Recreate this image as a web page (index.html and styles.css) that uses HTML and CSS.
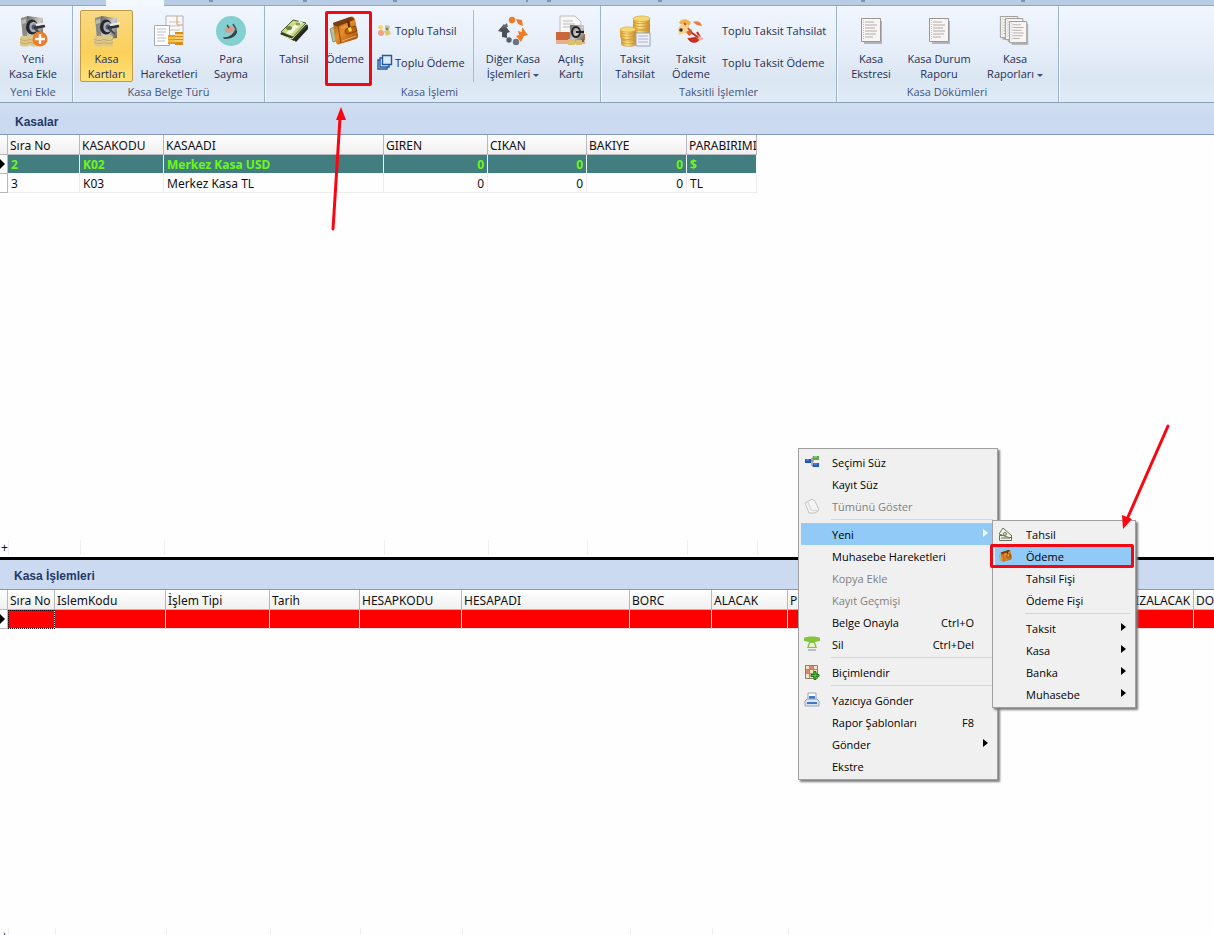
FILE: index.html
```
<!DOCTYPE html>
<html lang="tr">
<head>
<meta charset="utf-8">
<title>Kasa Kartları</title>
<link rel="stylesheet" href="styles.css">
</head>
<body>
<svg class="defs" aria-hidden="true">
  <defs>
    <linearGradient id="steel" x1="0" y1="0" x2="1" y2="1"><stop offset="0" stop-color="#66635e"/><stop offset=".5" stop-color="#cfcdc9"/><stop offset="1" stop-color="#55534f"/></linearGradient>
    <linearGradient id="gold" x1="0" y1="0" x2="1" y2="0"><stop offset="0" stop-color="#d99a2b"/><stop offset=".4" stop-color="#ffe58a"/><stop offset="1" stop-color="#c58a1f"/></linearGradient>
    <linearGradient id="leather" x1="0" y1="0" x2="1" y2="1"><stop offset="0" stop-color="#9c5010"/><stop offset=".45" stop-color="#e88f2c"/><stop offset="1" stop-color="#93440a"/></linearGradient>
    <symbol id="safe" viewBox="0 0 32 32">
      <path d="M4 3l7-2v21l-5 3z" fill="#8d8b87"/><path d="M10 1l16 2v20l-16 2z" fill="url(#steel)"/>
      <path d="M5 5l4-1v4l-4 1z" fill="#bdbab4"/>
      <ellipse cx="15" cy="12" rx="6" ry="7.500" fill="#24262b"/><ellipse cx="16.500" cy="12" rx="4.200" ry="5.200" fill="#a9adb6"/><circle cx="17" cy="12" r="2.500" fill="#4e5663"/>
      <path d="M17 13l11-2" stroke="#2d3036" stroke-width="2.500"/><path d="M18 14l6 5" stroke="#45484e" stroke-width="2"/><path d="M19 10l10-2" stroke="#eee" stroke-width="2.200"/>
      <path d="M3 23c0-3 10-3 10 0v7c0 2-10 2-10 0zM13 22c0-3 9-3 9 0v8c0 2-9 2-9 0z" fill="#dcc888"/>
      <path d="M3 24c2 2 8 2 10 0M13 24c2 2 7 2 9 0M3 27c2 2 8 2 10 0M13 27c2 2 7 2 9 0" stroke="#b89e60" fill="none" stroke-width=".7"/>
    </symbol>
    <symbol id="coins" viewBox="0 0 20 16">
      <path d="M1 4v8c0 4 18 4 18 0V4z" fill="url(#gold)"/><path d="M1 7c2 3 16 3 18 0M1 10c2 3 16 3 18 0M1 13c2 3 16 3 18 0" fill="none" stroke="#c08a2c" stroke-width=".7"/><ellipse cx="10" cy="4" rx="9" ry="3" fill="#f8d76c" stroke="#c99438" stroke-width=".6"/>
    </symbol>
    <symbol id="page" viewBox="0 0 24 28">
      <path d="M4 4h18v23H4z" fill="#8e8e8e" opacity=".6"/><path d="M1.500 1.500h19v23h-19z" fill="#f7f6f5" stroke="#9a9693"/>
      <path d="M5 5h9M5 8h12M5 11h10M5 14h12M5 17h11M5 20h8" stroke="#b3a9a6"/><path d="M3.500 3v20" stroke="#c9c3c1" stroke-dasharray="1 1"/>
    </symbol>
    <symbol id="wallet" viewBox="0 0 32 32">
      <path d="M1 14l4-2 2 14-3 1z" fill="#b9c39a" stroke="#6b7550" stroke-width=".7"/>
      <path d="M4 8L21 2c3-1 4 0 5 2l3 16c0 2 0 3-2 4L11 29c-2 1-4 0-4-2z" fill="url(#leather)"/>
      <path d="M4 8L21 2c3 0 4 1 4 3L10 11c-2 1-5 0-6-3z" fill="#7a3d10"/>
      <path d="M9 11l3 17" stroke="#8b470d"/><path d="M19 6l2 8" stroke="#5e2c08" stroke-width="2.500"/><path d="M17 14l9-3 2 5-9 3c-3 0-4-3-2-5z" fill="#b9620f" stroke="#7b3a08" stroke-width=".8"/>
      <path d="M19 13l3-1 1 4-3 1z" fill="#ffd24a"/><path d="M12 13l5-2M13 26l14-5" stroke="#f4ac52"/>
    </symbol>
  </defs>
</svg>

<div class="app">
  <div class="tabstrip">
    <div class="tab-active"></div>
    <svg class="tab-marks" width="1214" height="3" aria-hidden="true"><path d="M209 1h4M303 1h4M393 1h4M527 0v2M547 1h4M658 1h4M861 1h4M1021 1h4" stroke="#4a5a78"/></svg>
  </div>

  <nav class="ribbon" aria-label="Kasa">
    <section class="group group-first">
      <div class="tools">
        <button class="tool w-66"><svg class="icon"><use href="#safe"/><circle cx="23" cy="24" r="7.500" fill="#ef7a28"/><path d="M23 19v10M18 24h10" stroke="#fff" stroke-width="2.500"/></svg><span>Yeni<br>Kasa Ekle</span></button>
      </div>
      <h2>Yeni Ekle</h2>
    </section>
    <section class="group group-type">
      <div class="tools">
        <button class="tool w-53 active"><svg class="icon"><use href="#safe"/></svg><span>Kasa<br>Kartları</span></button>
        <button class="tool w-72"><svg class="icon"><path d="M13 1h17v25H13z" fill="#f8f8fa" stroke="#b5b0ae"/><path d="M16 7h11M16 11h11M16 15h11" stroke="#c5c3c8"/><path d="M24 1v9h6" stroke="#d6a35c" fill="none"/><path d="M1.500 10.500h15v20h-15z" fill="#fff" stroke="#a6abb4"/><path d="M4 14h9M4 17h9M4 20h7M4 23h9M4 26h8" stroke="#b9bdc7"/><path d="M15 20h8v9h-8z" fill="#e79a25"/><path d="M15 23h8M15 26h8" stroke="#ffe37d"/><path d="M22 17h8v13h-8z" fill="#d98a1f"/><path d="M22 20h8M22 23h8M22 26h8" stroke="#ffe68d" stroke-width="1.500"/></svg><span>Kasa<br>Hareketleri</span></button>
        <button class="tool w-52"><svg class="icon"><circle cx="16" cy="16" r="15" fill="#84cfd0"/><path d="M8 22c4 1 8-1 10-4l4-3c1 4-3 9-13 9z" fill="#33404e"/><path d="M10 14l3-3 5 1 1 4-4 2-5-1z" fill="#d99a88"/><path d="M12 10l2 3M18 9l3 5-2 4" stroke="#54495a" stroke-width="1.500" fill="none"/></svg><span>Para<br>Sayma</span></button>
      </div>
      <h2>Kasa Belge Türü</h2>
    </section>
    <section class="group group-ops">
      <div class="tools">
        <button class="tool w-50"><svg class="icon"><path d="M2 19L16 6l14 4-14 16z" fill="#303a22"/><path d="M3 17L15 5l13 3-13 14z" fill="#c9dc83" stroke="#4d5b2e"/><path d="M8 18l13-12 4 1-13 13z" fill="#f5f7e4"/><path d="M2 20l12 4 14-15" fill="none" stroke="#e7efc4"/><path d="M16 25L30 10v4L18 27z" fill="#20261a"/><ellipse cx="11" cy="13" rx="3" ry="2" fill="#6d8340"/><ellipse cx="20" cy="9" rx="2.500" ry="1.600" fill="#8aa050"/></svg><span>Tahsil</span></button>
        <button class="tool w-52"><svg class="icon"><use href="#wallet"/></svg><span>Ödeme</span><i class="mark mark-tool"></i></button>
        <div class="stack stack-line">
          <button class="mini"><svg width="16" height="16"><path d="M2 3l4 1-1 4-4-2z" fill="#f7d45b"/><circle cx="4" cy="11" r="3" fill="#f2a08a"/><path d="M8 3l5 1-1 4-4-1z" fill="#c4c49c"/><path d="M7 9l5-1 2 4-5 2z" fill="#d9c96a"/><circle cx="10" cy="7" r="1.500" fill="#7c8a5c"/></svg>Toplu Tahsil</button>
          <button class="mini"><svg width="16" height="16" fill="#dcebfb" stroke="#24599f" stroke-width="1.400"><path d="M1 6h9v9H1z"/><path d="M3 4h9v9H3z"/><path d="M5.500 1.500h9v9h-9z"/></svg>Toplu Ödeme</button>
        </div>
        <button class="tool w-78"><svg class="icon"><circle cx="15" cy="5" r="3.200" fill="#ef7b26"/><path d="M19 4l6 1 1 6-5-2z" fill="#ef7b26"/><path d="M25 12l6 8-4 1-3 6-5-6 3-1-1-4 4 1z" fill="#f07c24"/><path d="M7 9l6 8-3 1v5l-5-1v-5l-4-1z" fill="#4c5058"/><path d="M4 13l6-5 1 4z" fill="#666b74"/><circle cx="12" cy="25" r="2.700" fill="#5a6069"/><circle cx="19" cy="27" r="3.200" fill="#6a7480"/></svg><span>Diğer Kasa<br>İşlemleri <b class="caret"></b></span></button>
        <button class="tool w-38"><svg class="icon"><path d="M5 1h15l6 6v15H5z" fill="#f7f7f7" stroke="#bebebe"/><path d="M8 6h10M8 9h12M8 12h12" stroke="#b8b8b8"/><path d="M1 17h13l3 2h13v10H1z" fill="#c9683a"/><path d="M1 25h29v4H1z" fill="#e9b08a"/><path d="M15 10h14v17H15z" fill="url(#steel)"/><ellipse cx="21" cy="17" rx="4" ry="5" fill="none" stroke="#222" stroke-width="2"/><path d="M21 17h8" stroke="#222" stroke-width="2"/><path d="M13 24h7v6h-7zM21 25h6v5h-6z" fill="#d8bf76"/></svg><span>Açılış<br>Kartı</span></button>
      </div>
      <h2>Kasa İşlemi</h2>
    </section>
    <section class="group group-installment">
      <div class="tools">
        <button class="tool w-56"><svg class="icon"><use href="#coins" x="13" y="7" width="19" height="15"/><use href="#coins" x="13" y="0" width="19" height="15"/><use href="#coins" x="1" y="18" width="18" height="14"/><use href="#coins" x="0" y="11" width="18" height="14"/><path d="M17 18h14v13H17z" fill="#eef1fa" stroke="#98a0bb"/><path d="M19 21h10M19 24h10M19 27h10" stroke="#a9b2cf"/></svg><span>Taksit<br>Tahsilat</span></button>
        <button class="tool w-56"><svg class="icon"><path d="M4 8c2-5 9-5 12 0l-4 5z" fill="#f2b34d"/><path d="M3 14c1-6 8-8 11-3l-3 7-7 2z" fill="#f7d48a"/><circle cx="6" cy="15" r="1.800" fill="#2b3440"/><path d="M11 17l5-3 2 4-4 3z" fill="#e2602f"/><path d="M18 7c4-2 8 0 9 4l-5-1z" fill="#ee7a42"/><path d="M17 18l7 5M14 24c2 3 7 4 9 1l-3-2z" stroke="#c92a1c" stroke-width="2" fill="#d63a26"/><path d="M22 17l3 5" stroke="#c92a1c" stroke-width="2"/><path d="M23 20l6 4-5 2z" fill="#f1b0a0"/><path d="M9 8l2 2M13 13l4 5" stroke="#d4502a" stroke-width="2"/></svg><span>Taksit<br>Ödeme</span></button>
        <div class="stack stack-plain">
          <button class="mini">Toplu Taksit Tahsilat</button>
          <button class="mini">Toplu Taksit Ödeme</button>
        </div>
      </div>
      <h2>Taksitli İşlemler</h2>
    </section>
    <section class="group group-reports">
      <div class="tools">
        <button class="tool w-60"><svg class="icon"><use href="#page" x="5" y="2" width="24" height="28"/></svg><span>Kasa<br>Ekstresi</span></button>
        <button class="tool w-76"><svg class="icon"><use href="#page" x="5" y="2" width="24" height="28"/></svg><span>Kasa Durum<br>Raporu</span></button>
        <button class="tool w-76"><svg class="icon"><use href="#page" x="0" y="-1" width="22" height="28"/><use href="#page" x="5" y="1" width="22" height="28"/><use href="#page" x="9" y="4" width="22" height="28"/></svg><span>Kasa<br>Raporları <b class="caret"></b></span></button>
      </div>
      <h2>Kasa Dökümleri</h2>
    </section>
  </nav>

  <main class="panes">
    <section class="pane">
      <h1 class="pane-title">Kasalar</h1>
      <table class="grid grid-accounts">
        <colgroup><col class="c-8"><col class="c-72"><col class="c-84"><col class="c-220"><col class="c-104"><col class="c-99"><col class="c-100"><col class="c-70"></colgroup>
        <thead><tr><th></th><th>Sıra No</th><th>KASAKODU</th><th>KASAADI</th><th>GIREN</th><th>CIKAN</th><th>BAKIYE</th><th>PARABIRIMI</th></tr></thead>
        <tbody>
          <tr class="selected"><td><i class="pointer"></i></td><td>2</td><td>K02</td><td>Merkez Kasa USD</td><td class="num">0</td><td class="num">0</td><td class="num">0</td><td>$</td></tr>
          <tr><td></td><td>3</td><td>K03</td><td>Merkez Kasa TL</td><td class="num">0</td><td class="num">0</td><td class="num">0</td><td>TL</td></tr>
        </tbody>
      </table>
      <div class="footer footer-accounts"><span class="c-9">+</span><span class="c-72"></span><span class="c-84"></span><span class="c-220"></span><span class="c-104"></span><span class="c-99"></span><span class="c-100"></span><span class="c-70"></span></div>
    </section>
    <section class="pane pane-lower">
      <h1 class="pane-title title-lower">Kasa İşlemleri</h1>
      <table class="grid grid-moves">
        <colgroup><col class="c-8"><col class="c-47"><col class="c-111"><col class="c-104"><col class="c-90"><col class="c-102"><col class="c-168"><col class="c-82"><col class="c-76"><col class="c-320"><col class="c-86"><col class="c-90"></colgroup>
        <thead><tr><th></th><th>Sıra No</th><th>IslemKodu</th><th>İşlem Tipi</th><th>Tarih</th><th>HESAPKODU</th><th>HESAPADI</th><th>BORC</th><th>ALACAK</th><th>P</th><th>DOVIZALACAK</th><th>DO</th></tr></thead>
        <tbody><tr class="alert"><td><i class="pointer"></i></td><td class="focus"></td><td></td><td></td><td></td><td></td><td></td><td></td><td></td><td></td><td></td><td></td></tr></tbody>
      </table>
      <div class="footer footer-moves"><span class="c-9">+</span><span class="c-47"></span><span class="c-111"></span><span class="c-104"></span><span class="c-90"></span><span class="c-102"></span><span class="c-168"></span><span class="c-82"></span><span class="c-76"></span></div>
    </section>
  </main>
</div>

<div class="menu menu-main" role="menu">
  <button class="item" role="menuitem"><svg width="16" height="16"><path d="M5 7h5M8 7v5h3M8 7V4h2" stroke="#777" fill="none"/><path d="M1 5h6v4H1z" fill="#1f52b8"/><path d="M9 2h6v4H9z" fill="#58a94a"/><path d="M9 9h6v4H9z" fill="#2458c4"/><path d="M2 6h3M10 10h3" stroke="#79a6ea"/><path d="M10 3h3" stroke="#b5e0a5"/></svg><span>Seçimi Süz</span></button>
  <button class="item" role="menuitem"><span>Kayıt Süz</span></button>
  <button class="item" role="menuitem" disabled><svg width="16" height="16"><path d="M1 5l7-4 3 2 4 9-4 3H5z" fill="#f4f4f4" stroke="#c2c2c2"/><path d="M4 4l3 8 8 1" fill="none" stroke="#d2d2d2"/></svg><span>Tümünü Göster</span></button>
  <hr>
  <button class="item open" role="menuitem"><span>Yeni</span><i class="arrow"></i></button>
  <button class="item" role="menuitem"><span>Muhasebe Hareketleri</span></button>
  <button class="item" role="menuitem" disabled><span>Kopya Ekle</span></button>
  <button class="item" role="menuitem" disabled><span>Kayıt Geçmişi</span></button>
  <button class="item" role="menuitem"><span>Belge Onayla</span><kbd>Ctrl+O</kbd></button>
  <button class="item" role="menuitem"><svg width="16" height="16"><path d="M0 2c2-2 14-2 16 0v3l-5 1 2 6H3l2-6-5-1z" fill="#86c440"/><path d="M6 7h4l1 4H5z" fill="#e7f5d2"/><path d="M4 13h8v2H4z" fill="#b9c0c4"/></svg><span>Sil</span><kbd>Ctrl+Del</kbd></button>
  <hr>
  <button class="item" role="menuitem"><svg width="16" height="16"><path d="M1.500 1.500h12v13h-12z" fill="#f3e4c8" stroke="#8d7f74"/><path d="M5.500 2v12M9.500 2v12M2 5.500h11M2 9.500h11" stroke="#a98a78"/><path d="M6 2h3v3H6zM2 6h3v3H2z" fill="#d9876b"/><path d="M10 7.500h2v3h3v2h-3v3h-2v-3H7v-2h3z" fill="#50c12c" stroke="#1c7a16"/></svg><span>Biçimlendir</span></button>
  <hr>
  <button class="item" role="menuitem"><svg width="16" height="16"><path d="M4 1h8v7H4z" fill="#fff" stroke="#9aa5b5"/><path d="M5 4h6v4H5z" fill="#3f79c9"/><path d="M1 9l2-2h10l2 2v5H1z" fill="#dfe5ef" stroke="#97a4b8"/><path d="M3 10h10v2H3z" fill="#4378bd"/></svg><span>Yazıcıya Gönder</span></button>
  <button class="item" role="menuitem"><span>Rapor Şablonları</span><kbd>F8</kbd></button>
  <button class="item" role="menuitem"><span>Gönder</span><i class="arrow"></i></button>
  <button class="item" role="menuitem"><span>Ekstre</span></button>
</div>

<div class="menu menu-sub" role="menu">
  <button class="item" role="menuitem"><svg width="16" height="16" fill="#f1f3e2" stroke="#68705a"><path d="M1.500 9.500h12v5h-12z"/><path d="M1 8l4-6 9 8-2 2z"/><circle cx="7" cy="8" r="1.500"/><path d="M3 12h9"/></svg><span>Tahsil</span></button>
  <button class="item hot" role="menuitem"><svg width="16" height="16"><use href="#wallet" x="1" y="1" width="14" height="14"/></svg><span>Ödeme</span><i class="mark mark-item"></i></button>
  <button class="item" role="menuitem"><span>Tahsil Fişi</span></button>
  <button class="item" role="menuitem"><span>Ödeme Fişi</span></button>
  <hr>
  <button class="item" role="menuitem"><span>Taksit</span><i class="arrow"></i></button>
  <button class="item" role="menuitem"><span>Kasa</span><i class="arrow"></i></button>
  <button class="item" role="menuitem"><span>Banka</span><i class="arrow"></i></button>
  <button class="item" role="menuitem"><span>Muhasebe</span><i class="arrow"></i></button>
</div>

<svg class="pointers" width="1214" height="935" aria-hidden="true">
  <g stroke="#fb0510" stroke-width="3" stroke-linecap="round" fill="#fb0510">
    <path d="M333 229L340 118M1168 426L1128 517"/>
    <path d="M341 107L346 120L336 120zM1123 529L1122 515L1132 519z" stroke="none"/>
  </g>
</svg>
</body>
</html>
```
FILE: styles.css
```
* { box-sizing: border-box; }
body { margin: 0; font: 11px/15px "Open Sans", "Noto Sans", sans-serif; color: #1e2f55; background: #fefefe; overflow: hidden; }
button { font: inherit; color: inherit; background: none; border: 0; padding: 0; text-align: left; }
h1, h2 { margin: 0; }
.defs { position: absolute; width: 0; height: 0; }
.app { display: flex; flex-direction: column; height: 100vh; }

.tabstrip { position: relative; flex: none; height: 6px; padding-left: 106px; background: #b9cce6; border-bottom: 1px solid #8fa6c6; }
.tab-active { width: 58px; height: 6px; background: #f3f8fe; }
.tab-marks { position: absolute; left: 0; top: 0; }

.ribbon { flex: none; display: flex; height: 97px; background: linear-gradient(#f1f6fe, #e6eef9 45%, #dbe6f3 75%, #e1ebf8); border-bottom: 1px solid #8ba0bd; }
.group { display: flex; flex-direction: column; flex: none; padding-top: 4px; border-right: 1px solid #9fb2cc; box-shadow: 1px 0 #f3f8fe; }
.group-first { padding-right: 6px; }
.group-type { padding-left: 7px; padding-right: 7px; }
.group-ops { padding-left: 4px; padding-right: 10px; }
.group-installment { padding-left: 6px; padding-right: 6px; }
.group-reports { padding-left: 4px; padding-right: 5px; }
.group h2 { font-size: 11px; font-weight: 400; line-height: 19px; text-align: center; color: #41557c; }
.tools { display: flex; height: 72px; }
.tool { position: relative; display: flex; flex-direction: column; align-items: center; gap: 4px; padding-top: 5px; text-align: center; white-space: nowrap; }
.tool.active { padding-top: 4px; background: linear-gradient(#f8d984, #fbd05a 60%, #ffe27a); border: 1px solid #c29b45; border-radius: 2px; }
.icon { width: 32px; height: 32px; flex: none; }
.w-38 { width: 38px; } .w-50 { width: 50px; } .w-52 { width: 52px; } .w-53 { width: 53px; }
.w-56 { width: 56px; } .w-60 { width: 60px; } .w-66 { width: 66px; } .w-72 { width: 72px; }
.w-76 { width: 76px; } .w-78 { width: 78px; }
.caret { display: inline-block; vertical-align: middle; border: 3px solid transparent; border-top-color: #3c4f78; border-bottom: 0; }
.stack { display: flex; flex-direction: column; gap: 12px; padding-top: 10px; }
.stack-line { width: 103px; padding-left: 6px; border-right: 1px solid #a9bad1; }
.stack-plain { width: 111px; padding-left: 3px; }
.mini { display: flex; align-items: center; gap: 2px; height: 20px; white-space: nowrap; }
.mini svg { flex: none; }

.panes { flex: 1; min-height: 0; display: grid; grid-template-rows: 454fr 378fr; }
.pane { display: flex; flex-direction: column; min-height: 0; overflow: hidden; }
.pane-lower { border-top: 3px solid #000; }
.pane-title { flex: none; height: 32px; padding: 4px 15px 0; font: bold 12px/31px "Liberation Sans", Arial, sans-serif; color: #233a66; background: linear-gradient(#cfdfee, #ccdaf1 40%); border-bottom: 1px solid #8298bd; }
.title-lower { height: 30px; padding: 1px 14px 0; background: #ccdaf1; }

.grid { flex: none; border-collapse: separate; border-spacing: 0; table-layout: fixed; color: #111; font: 12px/16px "Noto Sans", sans-serif; }
.grid-accounts { width: 757px; }
.grid-moves { width: 1284px; }
.grid th { height: 20px; padding: 3px 0 0 2px; font-weight: 400; text-align: left; white-space: nowrap; overflow: hidden; background: linear-gradient(#fff, #f1efef); border-right: 1px solid #b5b8bd; border-bottom: 1px solid #b5b8bd; }
.grid td { height: 19px; padding: 2px 3px 0; border-right: 1px solid #ececec; border-bottom: 1px solid #ececec; white-space: nowrap; }
.grid td:first-child { padding: 0; background: #fff; border-color: #b5b8bd; }
.num { text-align: right; }
.selected { font-weight: 700; color: #6cf814; background: #427d80; }
.selected td { border-color: #f3f8f8; }
.alert { background: #f00; }
.alert td { border-color: #fce0e0; }
.grid .focus { outline: 1px dotted #200; outline-offset: -1px; }
.pointer { display: block; width: 0; border: 5px solid transparent; border-left-color: #000; border-right: 0; }
.footer { display: flex; height: 15px; flex: none; margin-top: auto; margin-bottom: 2px; color: #111; font-size: 12px; line-height: 15px; }
.footer-moves { height: 7px; margin-bottom: 0; overflow: hidden; }
.footer span { flex: none; border-right: 1px solid #efefef; }
.footer span:first-child { padding-left: 1px; }
.c-8 { width: 8px; } .c-9 { width: 9px; } .c-47 { width: 47px; } .c-70 { width: 70px; } .c-72 { width: 72px; }
.c-76 { width: 76px; } .c-82 { width: 82px; } .c-84 { width: 84px; } .c-86 { width: 86px; } .c-90 { width: 90px; }
.c-99 { width: 99px; } .c-100 { width: 100px; } .c-102 { width: 102px; } .c-104 { width: 104px; } .c-111 { width: 111px; }
.c-168 { width: 168px; } .c-220 { width: 220px; } .c-320 { width: 320px; }

.menu { position: absolute; padding: 2px; color: #000; background: #f0f0f0; border: 1px solid #a0a0a0; box-shadow: 2px 2px 2px #7d7d7d; }
.menu-main { left: 798px; top: 448px; width: 200px; }
.menu-sub { left: 992px; top: 520px; width: 144px; }
.item { position: relative; display: grid; grid-template-columns: 16px 1fr auto; column-gap: 12px; align-items: center; width: 100%; height: 22px; padding: 0 21px 0 3px; white-space: nowrap; }
.item span { grid-column: 2; grid-row: 1; }
.item kbd { font: inherit; grid-column: 3; grid-row: 1; }
.item:disabled { color: #808080; }
.open, .hot { background: #91c9f7; }
.menu hr { height: 1px; margin: 2px 2px 3px 30px; border: 0; background: #d5d5d5; }
.arrow { position: absolute; right: 7px; top: 6px; border: 4px solid transparent; border-left: 5px solid #000; border-right: 0; }
.open .arrow { border-left-color: #fff; }
.mark { position: absolute; border: 3px solid #f00814; border-radius: 2px; }
.mark-tool { left: 6px; top: 1px; width: 47px; height: 75px; }
.mark-item { left: -5px; top: -1px; width: 144px; height: 24px; }
.pointers { position: absolute; left: 0; top: 0; pointer-events: none; }
```
